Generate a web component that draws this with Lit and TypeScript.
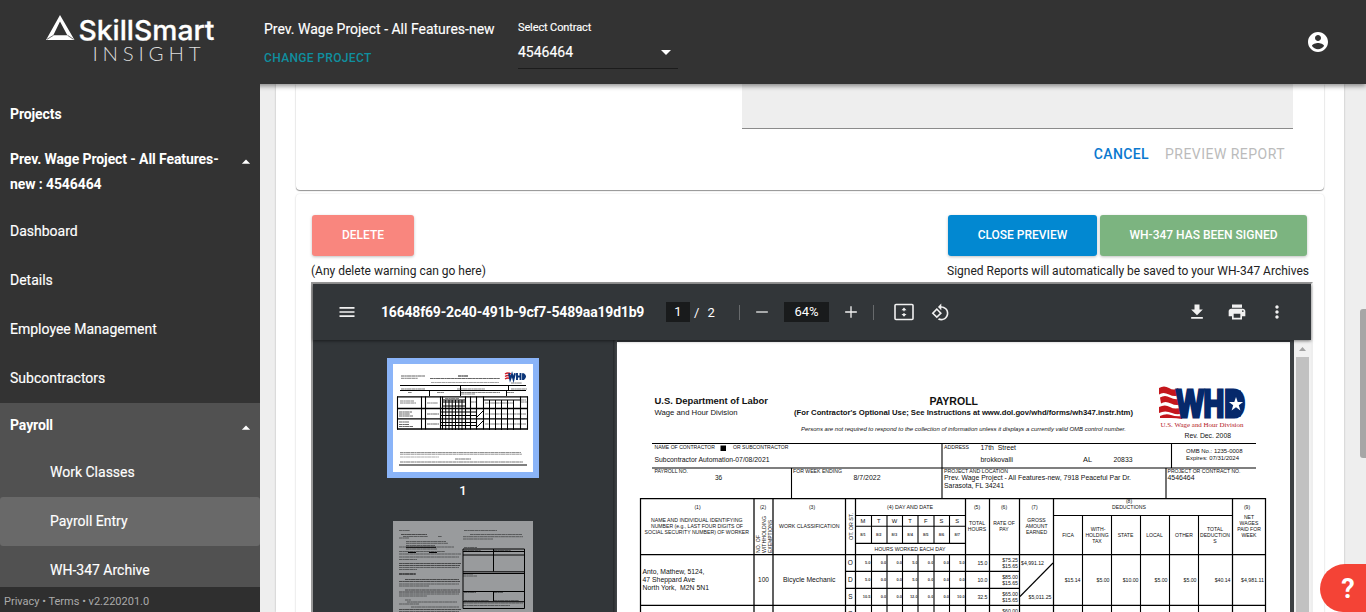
import { LitElement, html, svg, css } from "lit";
import { customElement } from "lit/decorators.js";
import { classMap } from "lit/directives/class-map.js";

const icons: Record<string, string> = {
  menu: "M3 18h18v-2H3v2zm0-5h18v-2H3v2zm0-7v2h18V6H3z",
  minus: "M5 11.25h14v1.5H5z",
  plus: "M19 12.8h-6.2V19h-1.6v-6.2H5v-1.6h6.2V5h1.6v6.2H19z",
  down: "M7 10l5 5 5-5z",
  up: "M7 14l5-5 5 5z",
  download: "M19 9h-4V3H9v6H5l7 7 7-7zM5 18v2h14v-2H5z",
  print: "M19 8H5c-1.66 0-3 1.34-3 3v6h4v4h12v-4h4v-6c0-1.66-1.34-3-3-3zm-3 11H8v-5h8v5zm3-7c-.55 0-1-.45-1-1s.45-1 1-1 1 .45 1 1-.45 1-1 1zm-1-9H6v4h12V3z",
  more: "M12 8c1.1 0 2-.9 2-2s-.9-2-2-2-2 .9-2 2 .9 2 2 2zm0 2c-1.1 0-2 .9-2 2s.9 2 2 2 2-.9 2-2-.9-2-2-2zm0 6c-1.1 0-2 .9-2 2s.9 2 2 2 2-.9 2-2-.9-2-2-2z",
  rotate: "M7.34 6.41L.86 12.9l6.49 6.48 6.49-6.48-6.5-6.49zM3.69 12.9l3.66-3.66L11 12.9l-3.66 3.66-3.65-3.66zm15.67-6.26C17.61 4.88 15.3 4 13 4V.76L8.76 5 13 9.24V6c1.79 0 3.58.68 4.95 2.05 2.73 2.73 2.73 7.17 0 9.9C16.58 19.32 14.79 20 13 20c-.97 0-1.94-.21-2.84-.61l-1.49 1.49C10.02 21.62 11.51 22 13 22c2.3 0 4.61-.88 6.36-2.64 3.52-3.51 3.52-9.21 0-12.72z",
  account: "M12 2C6.48 2 2 6.48 2 12s4.48 10 10 10 10-4.48 10-10S17.52 2 12 2zm0 3c1.66 0 3 1.34 3 3s-1.34 3-3 3-3-1.34-3-3 1.34-3 3-3zm0 14.2c-2.5 0-4.71-1.28-6-3.22.03-1.99 4-3.08 6-3.08 1.99 0 5.97 1.09 6 3.08-1.29 1.94-3.5 3.22-6 3.22z",
};

const icon = (name: string, size = 24) =>
  html`<svg class="icon" width=${size} height=${size} viewBox="0 0 24 24"><path fill="currentColor" d=${icons[name]}></path></svg>`;

type Opt = { w?: number; a?: "start" | "middle" | "end"; b?: boolean; i?: boolean; f?: string; c?: string };
const t = (x: number, y: number, s: string, size: number, o: Opt = {}) => svg`<text
  x=${x} y=${y} font-size=${size} fill=${o.c ?? "#111"}
  font-family=${o.f ?? "Liberation Sans, Arial, sans-serif"}
  font-weight=${o.b ? 700 : 400} font-style=${o.i ? "italic" : "normal"}
  text-anchor=${o.a ?? "start"}
  textLength=${o.w ?? "none"} lengthAdjust="spacingAndGlyphs">${s}</text>`;

const line = (x1: number, y1: number, x2: number, y2: number, w = 1.1) =>
  svg`<line x1=${x1} y1=${y1} x2=${x2} y2=${y2} stroke="#000" stroke-width=${w}></line>`;

const outerCols = [640.5, 754, 773, 845.5, 855.5, 965.5, 989.5, 1019.5, 1053.5, 1232.5, 1265.5];
const dayCols = [871.5, 887, 902.5, 918, 934, 949.5];
const dedCols = [1082.5, 1111.5, 1140.5, 1169.5, 1198.5];
const days = ["M", "T", "W", "T", "F", "S", "S"];
const hours = [
  { k: "O", y: 562.8, h: ["5.0", "0.0", "0.0", "5.0", "0.0", "0.0", "5.0"], total: "15.0", rate: ["$75.25", "$15.65"] },
  { k: "D", y: 579.8, h: ["5.0", "0.0", "0.0", "5.0", "0.0", "0.0", "0.0"], total: "10.0", rate: ["$85.00", "$15.65"] },
  { k: "S", y: 597, h: ["10.5", "0.0", "0.0", "12.0", "0.0", "0.0", "10.0"], total: "32.5", rate: ["$65.00", "$15.65"] },
];

const pageRules = () => svg`
  ${line(652, 443.5, 1256, 443.5)}${line(652, 468, 1256, 468)}
  ${line(942, 443, 942, 498)}${line(1171.5, 443, 1171.5, 468)}${line(791.5, 468, 791.5, 498)}${line(1166, 468, 1166, 498)}
  ${outerCols.map((x) => line(x, 498, x, 620, 1.25))}
  ${dayCols.map((x) => line(x, 515.5, x, 543.5))}
  ${dayCols.map((x) => line(x, 554.5, x, 620))}
  ${dedCols.map((x) => line(x, 515.5, x, 620))}
  ${line(640, 498.5, 1266, 498.5, 1.25)}${line(640, 554.5, 1266, 554.5, 1.25)}${line(640, 605.4, 1266, 605.4, 1.25)}
  ${line(855.5, 515.5, 965.5, 515.5)}${line(855.5, 526.3, 965.5, 526.3)}${line(855.5, 543.4, 965.5, 543.4)}
  ${line(1053.5, 515.5, 1232.5, 515.5)}
  ${line(845.5, 571.4, 1019.5, 571.4)}${line(845.5, 588.4, 1019.5, 588.4)}
  ${line(1020, 596.5, 1053, 563)}`;

const whdLogo = () => svg`
  <g fill="#c4161c">
    <path d="M1159 388q5-3 10 0t9 0l3 6.500q-6 3-12 0t-10 0z"></path>
    <path d="M1160 397.500q5-3 10 0t11 1l2 5q-6 3-12 0t-10 0z"></path>
    <path d="M1159 407q6-3 11 0t13 0l2 5q-6 4-13 1t-13 0z"></path>
    <path d="M1160 416q6-3 11-1t12 1l-1 3q-6-1-11-1t-11 0z"></path>
  </g>
  <text x="1176.500" y="416.800" font-size="38" font-weight="700" font-family="Liberation Sans, Arial, sans-serif" fill="#06296b"
    stroke="#06296b" stroke-width="3.200" textLength="68.500" lengthAdjust="spacingAndGlyphs">WHD</text>
  <rect x="1227" y="390.500" width="14" height="26" fill="#06296b"></rect>
  <path fill="#fff" d="M1236 397l1.700 5h5.400l-4.300 3.200 1.600 5.200-4.400-3.200-4.400 3.200 1.600-5.200-4.300-3.200h5.400z"></path>
  ${t(1160.5, 426.5, "U.S. Wage and Hour Division", 6.8, { w: 83, f: "Liberation Serif, serif", c: "#b3171d" })}`;

const pageText = () => svg`
  ${t(654.5, 403.8, "U.S. Department of Labor", 9, { b: true, w: 113.5 })}
  ${t(654.5, 415, "Wage and Hour Division", 7.2, { w: 83 })}
  ${t(929.5, 404.8, "PAYROLL", 10, { b: true, w: 48.5 })}
  ${t(794, 415.2, "(For Contractor's Optional Use; See Instructions at www.dol.gov/whd/forms/wh347.instr.htm)", 7.4, { b: true, w: 339 })}
  ${t(801, 431, "Persons are not required to respond to the collection of information unless it displays a currently valid OMB control number.", 5.6, { i: true, w: 325 })}
  ${t(1184.5, 438, "Rev. Dec. 2008", 6.6, { w: 46.5 })}
  ${t(654.5, 449.2, "NAME OF CONTRACTOR", 5, { w: 60.5 })}
  <rect x="720.5" y="445.5" width="5.5" height="5.5" fill="#000"></rect>
  ${t(733, 449.2, "OR SUBCONTRACTOR", 5, { w: 55.5 })}
  ${t(654.5, 462, "Subcontractor Automation-07/08/2021", 6.3, { w: 115 })}
  ${t(944, 449.2, "ADDRESS", 5, { w: 25 })}
  ${t(980.5, 450, "17th\u00a0 Street", 6.5, { w: 35.5 })}
  ${t(980.5, 462, "brokkovalli", 6.5, { w: 32.5 })}${t(1083, 462, "AL", 6.5, { w: 9 })}${t(1113.5, 462, "20833", 6.5, { w: 19 })}
  ${t(1186, 453, "OMB No.: 1235-0008", 5.5, { w: 56.5 })}
  ${t(1186, 460, "Expires: 07/31/2024", 5.5, { w: 53 })}
  ${t(654.5, 473.2, "PAYROLL NO.", 5, { w: 33.5 })}
  ${t(715, 480, "36", 6.5)}
  ${t(793, 473.2, "FOR WEEK ENDING", 5, { w: 49 })}
  ${t(853.5, 480, "8/7/2022", 6.5, { w: 27 })}
  ${t(944, 473.2, "PROJECT AND LOCATION", 5, { w: 64 })}
  ${t(944, 480.2, "Prev. Wage Project - All Features-new, 7918 Peaceful Par Dr.", 6.5, { w: 187 })}
  ${t(944, 488.2, "Sarasota, FL 34241", 6.5, { w: 60 })}
  ${t(1167.5, 473.2, "PROJECT OR CONTRACT NO.", 5, { w: 73 })}
  ${t(1167.5, 480.2, "4546464", 6.5, { w: 27 })}
  ${t(697.5, 509, "(1)", 5, { a: "middle" })}
  ${t(651, 522, "NAME AND INDIVIDUAL IDENTIFYING", 5.2, { w: 91.5 })}
  ${t(651, 528, "NUMBER (e.g., LAST FOUR DIGITS OF", 5.2, { w: 92 })}
  ${t(644.5, 534, "SOCIAL SECURITY NUMBER) OF WORKER", 5.2, { w: 104.5 })}
  ${t(763, 509, "(2)", 5, { a: "middle" })}
  <g transform="translate(760 553) rotate(-90)">${t(0, 0, "NO. OF", 5, { w: 18 })}${t(0, 5.8, "WITHHOLDING", 5, { w: 37 })}${t(0, 11.8, "EXEMPTIONS", 5, { w: 33 })}</g>
  ${t(812, 509, "(3)", 5, { a: "middle" })}${t(779, 528, "WORK CLASSIFICATION", 5.2, { w: 60.5 })}
  <g transform="translate(852.5 540) rotate(-90)">${t(0, 0, "OT. OR ST.", 5, { w: 27 })}</g>
  ${t(887, 509, "(4) DAY AND DATE", 5.2, { w: 46 })}
  ${days.map((d, i) => t(863 + i * 15.7, 523, d, 5.8, { a: "middle" }))}
  ${days.map((_, i) => t(863 + i * 15.7, 536.2, `8/${i + 1}`, 4, { a: "middle", b: true, c: "#444" }))}
  ${t(874.5, 550.8, "HOURS WORKED EACH DAY", 5.2, { w: 71 })}
  ${t(977, 509, "(5)", 5, { a: "middle" })}${t(977, 525, "TOTAL", 5.1, { a: "middle" })}${t(977, 531, "HOURS", 5.1, { a: "middle" })}
  ${t(1004, 509, "(6)", 5, { a: "middle" })}${t(1004, 525, "RATE OF", 5.1, { a: "middle" })}${t(1004, 531, "PAY", 5.1, { a: "middle" })}
  ${t(1034.5, 509, "(7)", 5, { a: "middle" })}${t(1036.5, 522, "GROSS", 5.1, { a: "middle" })}${t(1036.5, 528, "AMOUNT", 5.1, { a: "middle" })}${t(1036.5, 534, "EARNED", 5.1, { a: "middle" })}
  ${t(1129, 503.2, "(8)", 5, { a: "middle" })}${t(1112, 509, "DEDUCTIONS", 5.1, { w: 34 })}
  ${t(1068, 537, "FICA", 5.1, { a: "middle" })}
  ${t(1098, 531, "WITH-", 5.1, { a: "middle" })}${t(1097, 537, "HOLDING", 5.1, { a: "middle" })}${t(1097, 543, "TAX", 5.1, { a: "middle" })}
  ${t(1125.5, 537, "STATE", 5.1, { a: "middle" })}${t(1154.5, 537, "LOCAL", 5.1, { a: "middle" })}${t(1184, 537, "OTHER", 5.1, { a: "middle" })}
  ${t(1215, 531, "TOTAL", 5.1, { a: "middle" })}${t(1200, 537, "DEDUCTION", 5.1, { w: 30 })}${t(1215, 543, "S", 5.1, { a: "middle" })}
  ${t(1247, 509, "(9)", 5, { a: "middle" })}
  ${["NET", "WAGES", "PAID FOR", "WEEK"].map((s, i) => t(1249, 519 + i * 6, s, 5.1, { a: "middle" }))}
  ${t(642.5, 574, "Anto, Mathew, 5124,", 6.5, { w: 62 })}
  ${t(642.5, 582, "47 Sheppard Ave", 6.5, { w: 52.5 })}
  ${t(642.5, 590, "North York,\u00a0 M2N 5N1", 6.5, { w: 66.5 })}
  ${t(763.5, 582, "100", 6.5, { a: "middle" })}
  ${t(783, 582, "Bicycle Mechanic", 6.5, { w: 52.5 })}
  ${hours.map((r) => svg`
    ${t(850.3, r.y + 2.3, r.k, 6.5, { a: "middle" })}
    ${r.h.map((v, i) => t(870.6 + i * 15.7, r.y + 1.4, v, 4, { a: "end", b: true, c: "#444" }))}
    ${t(987.5, r.y + 2, r.total, 5.2, { a: "end" })}
    ${t(1018, r.y - 0.6, r.rate[0], 5.2, { a: "end" })}${t(1018, r.y + 5.4, r.rate[1], 5.2, { a: "end" })}`)}
  ${t(850.3, 616, "O", 6.5, { a: "middle" })}${t(1018, 613, "$60.00", 5.2, { a: "end" })}
  ${t(1021, 565, "$4,991.12", 5.2, { w: 23 })}${t(1028.5, 599, "$5,011.25", 5.2, { w: 23 })}
  ${["$15.14", "$5.00", "$10.00", "$5.00", "$5.00", "$40.14"].map((v, i) => t([1080.5, 1109.5, 1138.5, 1167.5, 1196.5, 1230.5][i], 582, v, 5.2, { a: "end" }))}
  ${t(1241, 582, "$4,981.11", 5.2, { w: 23 })}`;

/* Dotted strokes stand in for lines of copy at thumbnail size: [x, y, length, thickness]. */
const copy = (rows: number[][], color: string) =>
  rows.map(([x, y, l, w = 0.8]) => svg`<path d="M${x} ${y}h${l}" stroke=${color} stroke-width=${w} stroke-dasharray="3.5 .3 2 .25 4.2 .3"></path>`);
const rule = (d: string, w = 1) => svg`<path d=${d} fill="none" stroke="#000" stroke-width=${w}></path>`;

const thumbOne = () => html`<svg class="sheet" width="140" height="108" viewBox="0 0 140 108">
  <rect width="140" height="108" fill="#fff"></rect>
  ${copy([[8, 12, 24, 1.2], [8, 14.3, 17], [65, 12, 10, 1.3], [37, 14.5, 70, 1.1], [38, 18.5, 68, 0.6], [8, 25, 24, 0.9], [64, 25, 28], [118, 25, 16], [118, 19, 11], [15, 28.5, 4], [44, 28.5, 7], [68, 28.5, 39], [68, 30, 14], [114, 28.5, 7]], "#666")}
  ${copy([[7, 37, 14], [7, 39, 16], [34, 39, 11], [52, 34.5, 14], [78, 38, 5], [92, 39, 28], [128, 36, 5], [128, 38, 6], [6, 48, 13, 1], [6, 50, 11, 1], [6, 52, 14, 1], [34, 50, 12, 1], [92, 50, 41, 0.8], [6, 58, 10, 1], [6, 60.5, 10, 1], [6, 62.5, 14, 1], [34, 60, 12, 1], [92, 60, 41, 0.8]], "#666")}
  ${rule("M7 21.5h126M7 26.5h126M67.5 21v11M115.5 21v6M36.5 27v5M113.5 27v5")}
  ${rule("M4 32.8h131M4 44.5h131M4 54.8h131M4 65h131", 1.3)}
  ${rule("M4.5 32.5v33M28.5 32.5v33M32.5 32.5v33M47.5 32.5v33M49.5 32.5v33M72.5 32.5v33M77.5 32.5v33M83.5 32.5v33M90.5 32.5v33M127.5 32.5v33M134.5 32.5v33", 1.1)}
  ${rule("M52.7 36v30M56 36v30M59.2 36v30M62.5 36v30M65.8 36v30M69 36v30M96.5 36v30M102.5 36v30M108.5 36v30M114.5 36v30M120.5 36v30")}
  ${rule("M49.5 36h23M49.5 38h23M49.5 42h23M48 48h35M48 51.5h35M48 58.5h35M48 61.5h35M90 36h37M84 53l6-6M84 63l6-6")}
  ${copy([[7, 88.5, 121, 0.8], [7, 90.2, 122, 0.8], [7, 93, 39, 0.6], [62, 95, 16, 1], [7, 98, 123, 1]], "#777")}
  ${rule("M6 101h128")}
  <path d="M112 10q3-2 6 0M112 12.5q3-2 6 0M112 15q3-2 6 0" stroke="#d0202b" stroke-width="1.5" fill="none"></path>
  <path d="M116 9.3l1.2 6 1.8-5 1.5 5 1.5-6M124 9v7M127.500 9v7M124 12.5h3.500M130 10.2h0.6q3 2.4 0 4.8h-.6z" stroke="#0a3478" stroke-width="1.9" fill="none"></path>
</svg>`;

const leftCopy = [
  [6, 9.5, 11], [8, 13.5, 26, 1.2], [10, 15.5, 25], [45, 15.5, 4], [6, 17, 10], [13, 20.5, 40], [13, 22.3, 42], [13, 24.5, 29], [6, 26, 55],
  [13, 28, 31], [6, 30.5, 46], [6, 33, 62], [6, 36, 60], [6, 38.5, 18], [6, 42.5, 62, 1.1], [6, 44.5, 61, 1.1], [6, 46.5, 60], [6, 48.5, 18],
  [6, 53, 17, 1.8], [12, 58.5, 54, 1.2], [6, 60.5, 61, 1.2], [6, 63, 60], [6, 65, 30], [12, 69, 55, 1.2], [6, 71, 61, 1.2], [6, 73, 60], [6, 75, 28],
  [12, 79, 6], [14, 81, 50], [6, 83, 20], [18, 86, 48], [6, 88.5, 62, 1.2], [6, 90.5, 60],
];
const thumbTwo = () => html`<svg class="sheet" width="140" height="92" viewBox="0 0 140 92">
  <rect width="140" height="92" fill="#999b9d"></rect>
  ${copy(leftCopy, "#48494a")}
  ${copy([[71, 9.5, 33], [77, 13.5, 52], [70, 15.7, 60], [70, 18, 30], [71, 26.5, 13], [71, 29.5, 17], [101, 29.5, 17], [70, 53, 10], [70, 55, 14], [71, 71.5, 12], [101, 71.5, 9], [71, 79.5, 25], [101, 79.5, 25], [70, 82, 60], [70, 84.5, 47]], "#48494a")}
  ${rule("M15 31.5h8M36 31.5h8M13 26.3h30", 1)}
  ${rule("M70 28h61.5v59.5H70zM70 30.5h61M70 34h61M100.5 28v22.5M70 50.8h61M70 52.5h61M70 70.5h61M100.5 71v9M70 80.7h61", 1)}
</svg>`;

@customElement("side-nav")
class SideNav extends LitElement {
  static styles = css`
    :host { display: flex; flex-direction: column; width: 260px; flex: none; background: #333; color: #fff; font: 400 14px/25px Roboto, sans-serif; }
    nav { flex: 1; min-height: 0; overflow: hidden; }
    .item { display: flex; align-items: center; height: 49px; padding: 0 10px; box-sizing: border-box; -webkit-text-stroke: 0.15px #fff; }
    .bold { font-weight: 700; letter-spacing: -0.1px; -webkit-text-stroke: 0; }
    .top { height: 60px; }
    .project { height: 63px; padding-bottom: 7px; align-items: flex-start; }
    .project span { width: 215px; padding-top: 3px; }
    .project .icon { margin-top: 8px; }
    .group { background: #515151; }
    .head { height: 45px; }
    .sub { padding-left: 50px; }
    .active { background: #696969; border-radius: 3px; }
    .icon { margin-left: auto; margin-right: -6px; margin-top: 5px; flex: none; }
    footer { height: 25px; padding: 2px 4px 0; box-sizing: border-box; background: #2f2f2f; color: #aaa; font-size: 11px; }
  `;
  render() {
    return html`<nav>
        <div class="item bold top">Projects</div>
        <div class="item bold project"><span>Prev. Wage Project - All Features-new : 4546464</span>${icon("up", 20)}</div>
        ${["Dashboard", "Details", "Employee Management", "Subcontractors"].map((s) => html`<div class="item">${s}</div>`)}
        <div class="group">
          <div class="item bold head">Payroll ${icon("up", 20)}</div>
          ${["Work Classes", "Payroll Entry", "WH-347 Archive"].map(
            (s) => html`<div class=${classMap({ item: true, sub: true, active: s === "Payroll Entry" })}>${s}</div>`
          )}
        </div>
      </nav>
      <footer>Privacy • Terms • v2.220201.0</footer>`;
  }
}

@customElement("pdf-viewer")
class PdfViewer extends LitElement {
  static styles = css`
    :host { display: flex; flex-direction: column; height: 360px; width: 1002px; box-sizing: border-box; border: 2px solid #999; border-right-color: #eee; background: #323639; font-family: Roboto, sans-serif; color: #f1f1f1; }
    .bar { display: flex; align-items: center; height: 56px; flex: none; box-shadow: 0 1px 3px rgba(0, 0, 0, 0.5); z-index: 1; }
    .icon { display: block; flex: none; }
    .menu { margin-left: 24px; }
    .name { margin-left: 24px; width: 285px; font-weight: 700; font-size: 14px; letter-spacing: -0.19px; color: #fff; white-space: nowrap; }
    .box { background: #191b1c; height: 20px; line-height: 20px; width: 24px; text-align: center; font-size: 13px; color: #fff; }
    .zoom { width: 45px; margin: 0 12px; }
    .of { width: 45px; padding-left: 4px; font-size: 13px; word-spacing: 5px; color: #fff; }
    .sep { width: 1px; height: 15px; background: #676a6c; }
    .minus { margin-left: 12px; }
    .plus { margin-right: 12px; }
    .fit { margin-left: 18px; }
    .rot { margin-left: 15px; }
    .right { margin-left: auto; margin-right: 24px; display: flex; gap: 20px; }
    .body { display: flex; flex: 1; min-height: 0; overflow: hidden; }
    .thumbs { width: 300px; box-sizing: border-box; flex: none; padding-top: 18px; display: flex; flex-direction: column; align-items: center; }
    .sheet { display: block; flex: none; }
    .picked { border: 6px solid #8ab4f8; height: 108px; flex: none; }
    .num { font-size: 13px; font-weight: 500; line-height: 25px; height: 43px; flex: none; color: #fff; }
    .edge { width: 4px; background: linear-gradient(90deg, #25282a, #45494c); flex: none; }
    .paper { display: block; margin-top: 2px; background: #fff; flex: none; }
    .gap { width: 4px; flex: none; background: #3c4043; }
    .track { width: 17px; background: #f1f1f1; flex: none; display: flex; flex-direction: column; align-items: center; }
    .track i { width: 13px; flex: 1; background: #c1c1c1; }
  `;
  render() {
    return html`<div class="bar">
        <span class="menu">${icon("menu", 20)}</span><span class="name">16648f69-2c40-491b-9cf7-5489aa19d1b9</span>
        <span class="box">1</span><span class="of">/ 2</span>
        <span class="sep"></span><span class="minus">${icon("minus", 20)}</span><span class="box zoom">64%</span><span class="plus">${icon("plus", 20)}</span><span class="sep"></span>
        <svg class="icon fit" width="24" height="24" viewBox="0 0 24 24" fill="none" stroke="currentColor" stroke-width="1.6">
          <rect x="3" y="4.5" width="18" height="15" rx="1"></rect>
          <path fill="currentColor" stroke="none" d="M12 7.5l2.500 2.800h-1.900v1h-1.200v-1H9.500zM12 16.700l-2.500-2.800h1.900v-1h1.200v1h1.900z"></path></svg>
        <svg class="icon rot" width="19" height="19" viewBox="0 0 24 24"><path fill="currentColor" d=${icons.rotate}></path></svg>
        <span class="right">${icon("download", 20)}${icon("print", 20)}${icon("more", 20)}</span>
      </div>
      <div class="body">
        <div class="thumbs"><div class="picked">${thumbOne()}</div><div class="num">1</div>${thumbTwo()}</div>
        <div class="edge"></div>
        <svg class="paper" width="673" height="276" viewBox="617 342 673 276">${pageRules()}${pageText()}${whdLogo()}</svg>
        <div class="gap"></div>
        <div class="track"><svg width="17" height="17"><path d="M5 11l3.5-4 3.5 4z" fill="#a3a3a3"></path></svg><i></i></div>
      </div>`;
  }
}

@customElement("app-root")
class AppRoot extends LitElement {
  static styles = css`
    :host { display: flex; flex-direction: column; width: 1366px; height: 612px; overflow: hidden; position: relative; background: #eee; font-family: Roboto, sans-serif; }
    header { height: 84px; flex: none; background: #333; color: #fff; display: flex; box-shadow: 0 2px 5px rgba(0, 0, 0, 0.45); z-index: 2; }
    .logo { width: 264px; height: 84px; flex: none; }
    .project { width: 254px; padding-top: 20px; font-size: 14px; line-height: 18px; -webkit-text-stroke: 0.15px #fff; white-space: nowrap; }
    .change { margin-top: 11px; font-size: 12px; font-weight: 500; letter-spacing: 0.35px; color: #0f8f9f; -webkit-text-stroke: 0; }
    .contract { width: 160px; height: 69px; box-sizing: border-box; border-bottom: 1px solid #1c1c1c; padding-top: 21px; font-size: 11px; line-height: 14px; letter-spacing: -0.12px; -webkit-text-stroke: 0.15px #fff; }
    .value { display: flex; justify-content: space-between; align-items: flex-start; font-size: 14px; margin-top: 5px; line-height: 24px; letter-spacing: 0; }
    .account { margin: 30px 36px 0 auto; }
    .body { display: flex; flex: 1; min-height: 0; }
    side-nav { z-index: 3; }
    main { flex: 1; background: #fff; margin-left: 16px; padding: 0 20px; min-width: 0; overflow: hidden; box-shadow: 0 0 2px rgba(0, 0, 0, 0.25); }
    .card { border-radius: 4px; box-shadow: 0 1px 2px rgba(0, 0, 0, 0.16), 0 0 2px rgba(0, 0, 0, 0.1); box-sizing: border-box; }
    .form { height: 106px; box-shadow: 0 1px 1px rgba(0, 0, 0, 0.4), 0 0 2px rgba(0, 0, 0, 0.15); border-radius: 0 0 4px 4px; }
    .field { height: 44px; margin: 0 31px 0 446px; background: #eee; border-bottom: 1px solid #8b8b8b; }
    .links { display: flex; justify-content: flex-end; gap: 16px; padding: 16px 39px 0 0; font-size: 14px; line-height: 18px; letter-spacing: 0.46px; color: #bbb; }
    .links b { font-weight: 500; color: #0b79cf; letter-spacing: 0.4px; }
    .preview { margin-top: 4px; height: 460px; padding: 21px 0 0 15px; }
    .row { display: flex; justify-content: space-between; padding: 0 17px 0 1px; height: 41px; }
    .pair { display: flex; gap: 3px; }
    .btn { height: 41px; line-height: 40px; border-radius: 3px; color: #fff; font-size: 12px; font-weight: 500; text-align: center; box-shadow: 0 1px 3px rgba(0, 0, 0, 0.25); }
    .del { width: 102px; background: #f9867e; }
    .close { width: 149px; background: #0288d1; }
    .sign { width: 207px; background: #7cb480; }
    .notes { display: flex; justify-content: space-between; padding: 2px 15px 0 0; font-size: 12px; line-height: 26px; height: 24px; color: #222; }
    .gutter { width: 22px; flex: none; display: flex; justify-content: flex-end; }
    .thumb { width: 6px; height: 149px; margin-top: 225px; background: #a6a6a6; border-radius: 3px 0 0 3px; }
    .help { position: absolute; right: 0; bottom: 0; width: 46px; height: 48px; box-sizing: border-box; padding-left: 10px; border-radius: 26px 0 0 24px; background: #f44336; color: #fff; font: 700 27px/50px Roboto, sans-serif; text-align: center; z-index: 4; }
  `;
  render() {
    return html`<header>
        <svg class="logo" viewBox="0 0 264 84">
          <path fill="#fff" fill-rule="evenodd" d="M60 15L46 40h28.500zM60 21.500L53.300 35.200h14z"></path>
          <path d="M47 39.300l6.500-4M73.500 39.300l-6-4" stroke="#333" stroke-width=".7"></path>
          <text x="78.500" y="40" font-family="Inter, sans-serif" font-size="27.500" font-weight="500" fill="#fff" stroke="#fff" stroke-width=".3" textLength="136" lengthAdjust="spacingAndGlyphs">SkillSmart</text>
          <text x="92.500" y="61" font-family="Lato, sans-serif" font-size="20.500" font-weight="300" fill="#ddd" textLength="108">INSIGHT</text>
        </svg>
        <div class="project"><div>Prev. Wage Project - All Features-new</div><div class="change">CHANGE PROJECT</div></div>
        <div class="contract">Select Contract<div class="value">4546464 ${icon("down")}</div></div>
        <div class="account">${icon("account")}</div>
      </header>
      <div class="body">
        <side-nav></side-nav>
        <main>
          <section class="card form"><div class="field"></div><div class="links"><b>CANCEL</b><span>PREVIEW REPORT</span></div></section>
          <section class="card preview">
            <div class="row"><div class="btn del">DELETE</div><div class="pair"><div class="btn close">CLOSE PREVIEW</div><div class="btn sign">WH-347 HAS BEEN SIGNED</div></div></div>
            <div class="notes"><span>(Any delete warning can go here)</span><span>Signed Reports will automatically be saved to your WH-347 Archives</span></div>
            <pdf-viewer></pdf-viewer>
          </section>
        </main>
        <div class="gutter"><div class="thumb"></div></div>
      </div>
      <div class="help">?</div>`;
  }
}
